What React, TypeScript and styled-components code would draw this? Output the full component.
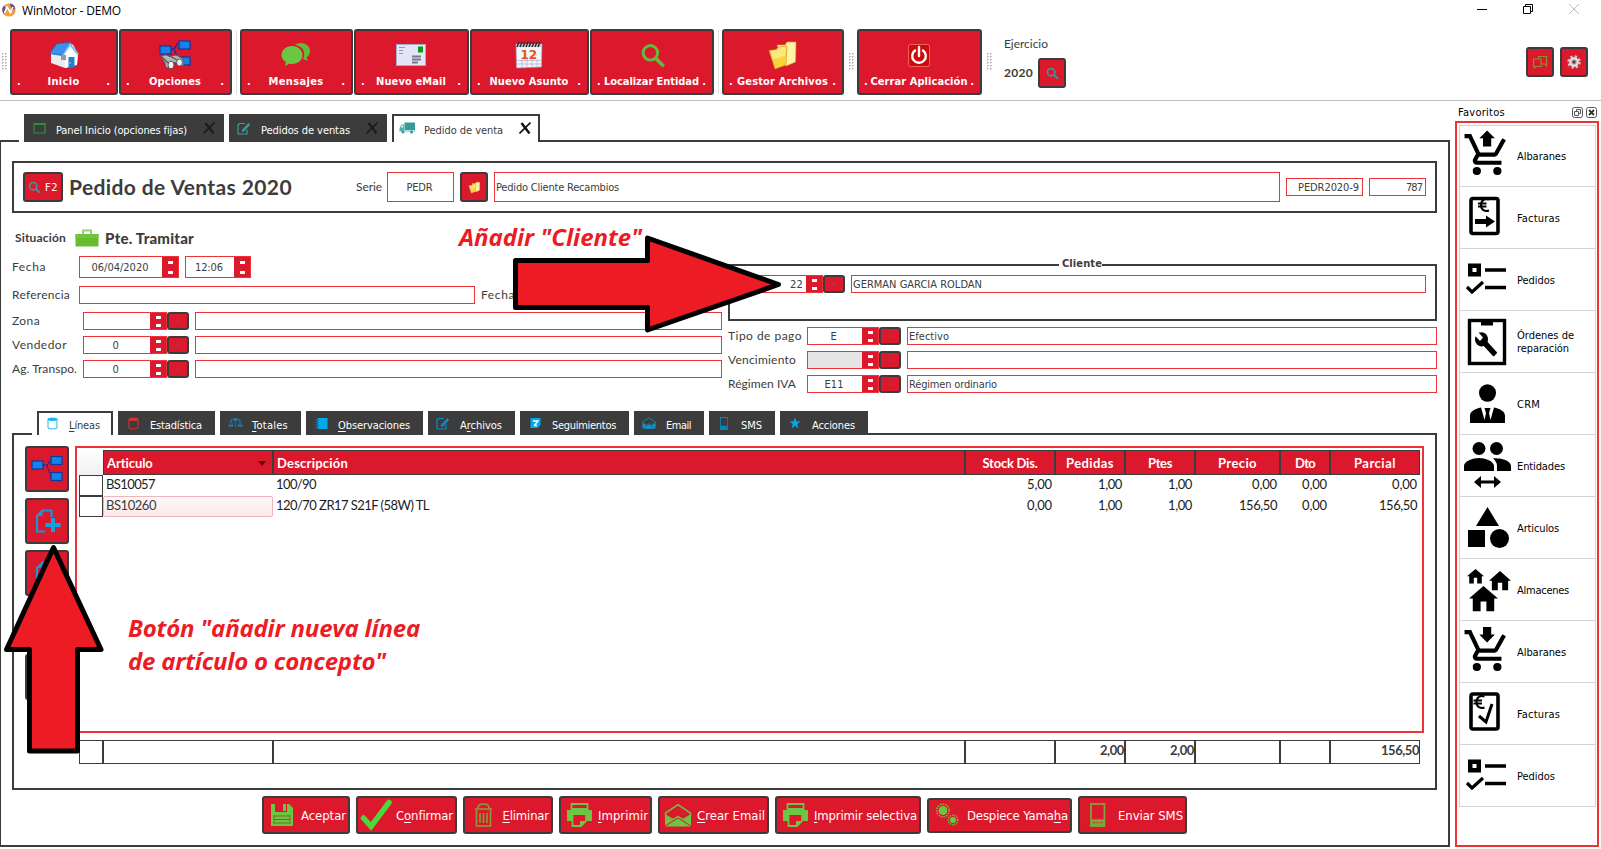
import React, { useLayoutEffect, useRef } from "react";
import styled, { createGlobalStyle, css } from "styled-components";

const RED = "#dc182c";
const LINE = "#ee3338";
const DARK = "#3c3c3c";
const GREEN = "#6cc644";
const BLUE = "#00a8ec";
const TAHOMA = `"DejaVu Sans Condensed", "DejaVu Sans", sans-serif`;
const GOTHIC = `Lato, "Open Sans", sans-serif`;

const Global = createGlobalStyle`
  * { box-sizing: border-box; }
  body { margin: 0; background: #fff; color: ${DARK}; font: 11px ${TAHOMA}; }
  svg { display: block; flex: none; }
  u { text-decoration: underline; text-underline-offset: 2px; }
`;

/* ---------- text ---------- */

const TextSpan = styled.span`
  white-space: pre;
  flex: none;
`;

/* One line of text tracked to a fixed width; "&" marks the accelerator letter. */
function Text({ w, children }: { w: number; children: string }) {
  const ref = useRef<HTMLSpanElement>(null);
  const at = children.indexOf("&");
  const plain = children.replace("&", "");
  useLayoutEffect(() => {
    const el = ref.current;
    if (!el) return;
    el.style.letterSpacing = "0px";
    const natural = el.getBoundingClientRect().width;
    el.style.letterSpacing = `${((w + 1 - natural) / plain.length).toFixed(3)}px`;
  }, [w, plain]);
  return (
    <TextSpan ref={ref}>
      {at < 0 ? plain : (
        <>
          {plain.slice(0, at)}
          <u>{plain[at]}</u>
          {plain.slice(at + 1)}
        </>
      )}
    </TextSpan>
  );
}

/* ---------- frame ---------- */

const Window = styled.div`
  position: relative;
  width: 1601px;
  height: 849px;
  overflow: hidden;
  background: #fff;
  display: flex;
  flex-direction: column;
`;
const TitleBar = styled.header`
  height: 29px;
  padding: 3px 21px 0 2px;
  display: flex;
  align-items: flex-start;
  gap: 6px;
  font: 12px/15px "Open Sans", sans-serif;
  color: #000;
`;
const WindowControls = styled.div`
  margin-left: auto;
  display: flex;
  gap: 35px;
`;
const Toolbar = styled.div`
  height: 72px;
  border-bottom: 1px solid #c0c0c0;
  padding-left: 2px;
  display: flex;
  align-items: flex-start;
`;
const Grip = styled.div<{ $ml?: number; $mr?: number }>`
  width: 5px;
  height: 17px;
  margin: 24px ${(p) => p.$mr ?? 3}px 0 ${(p) => p.$ml ?? 0}px;
  background: radial-gradient(circle at 0.7px 0.7px, #b4b4b4 0.8px, transparent 0.9px) 0 0 / 3px 3px;
`;
const Separator = styled.div`
  width: 1px;
  height: 64px;
  margin: 1px 3px 0 4px;
  background: #e2e2e2;
`;
const raised = css`
  background: ${RED};
  border: 2px solid ${DARK};
  border-radius: 3px;
  color: #fff;
`;
const ToolButton = styled.div<{ $w: number; $gap?: number }>`
  ${raised}
  width: ${(p) => p.$w}px;
  height: 66px;
  margin-right: ${(p) => p.$gap ?? 1}px;
  padding: 8px 6px 0 5px;
  display: flex;
  flex-direction: column;
  align-items: center;
  gap: 3px;
`;
const ToolCaption = styled.div`
  width: 100%;
  display: flex;
  justify-content: space-between;
  font-weight: bold;
  line-height: 15px;
`;
const IconButton = styled.div<{ $w: number; $h: number }>`
  ${raised}
  width: ${(p) => p.$w}px;
  height: ${(p) => p.$h}px;
  flex: none;
  display: flex;
  align-items: center;
  justify-content: center;
`;
const Exercise = styled.div`
  margin: 7px 0 0 12px;
  font: 12px/16px ${GOTHIC};
`;
const ExerciseRow = styled.div`
  display: flex;
  align-items: center;
  gap: 5px;
  margin-top: 6px;
  font-weight: bold;
`;
const ToolRight = styled.div`
  margin: 18px 13px 0 auto;
  display: flex;
  gap: 6px;
`;

/* ---------- tabs ---------- */

const Body = styled.div`
  flex: 1;
  display: flex;
  min-height: 0;
`;
const Main = styled.main`
  width: 1450px;
  height: 746px;
  padding-top: 13px;
  display: flex;
  flex-direction: column;
`;
const Strip = styled.div<{ $h: number }>`
  display: flex;
  gap: 5px;
  height: ${(p) => p.$h}px;
  flex: none;
`;
const StripLine = styled.div<{ $w?: number; $join?: boolean }>`
  ${(p) => (p.$w ? `width: ${p.$w}px;` : "flex: 1;")}
  ${(p) => p.$join && "margin-left: -5px;"}
  border-bottom: 2px solid ${DARK};
`;
const Tab = styled.div<{ $w: number; $active?: boolean }>`
  width: ${(p) => p.$w}px;
  display: flex;
  align-items: center;
  background: ${(p) => (p.$active ? "#fff" : DARK)};
  color: ${(p) => (p.$active ? DARK : "#fff")};
  border: 2px solid ${DARK};
  border-bottom-width: 0;
  padding: 3px 7px 0 2px;
`;
const TabIcon = styled.span`
  width: 22px;
  margin: 0 6px 5px 0;
  display: flex;
  justify-content: center;
`;
const TabClose = styled.span`
  margin: 0 0 5px auto;
`;
const Page = styled.section`
  flex: 1;
  border: solid ${DARK};
  border-width: 0 2px 2px 1px;
  padding: 19px 11px 0;
  display: flex;
  flex-direction: column;
`;

/* ---------- fields ---------- */

const HeaderBox = styled.div`
  height: 52px;
  border: 2px solid ${DARK};
  padding: 0 9px;
  display: flex;
  align-items: center;
  gap: 6px;
  flex: none;
`;
const Heading = styled.h1`
  margin: 0;
  width: 281px;
  font: bold 21px/26px ${GOTHIC};
`;
const Caption = styled.label<{ $w?: number }>`
  ${(p) => p.$w && `width: ${p.$w}px;`}
  flex: none;
  display: flex;
  font: 12px/16px ${GOTHIC};
`;
const Field = styled.div<{ $w?: number; $h?: number; $muted?: boolean }>`
  ${(p) => (p.$w ? `width: ${p.$w}px; flex: none;` : "flex: 1;")}
  height: ${(p) => p.$h ?? 18}px;
  border: 1px solid ${LINE};
  background: ${(p) => (p.$muted ? "#e4e4e4" : "#fff")};
  display: flex;
  align-items: center;
  overflow: hidden;
`;
const Value = styled.div<{ $align?: string }>`
  flex: 1;
  padding: 1px 3px 0 1px;
  display: flex;
  justify-content: ${(p) => p.$align ?? "flex-start"};
`;
const SpinBlock = styled.div<{ $tall?: boolean }>`
  width: 16px;
  align-self: stretch;
  background: ${RED};
  padding: ${(p) => (p.$tall ? "4px 0 3px" : "3px 0 2px")};
  display: flex;
  flex-direction: column;
  justify-content: space-between;
  align-items: center;
`;
const SpinMark = styled.i`
  width: 5px;
  height: 3px;
  background: #fff;
`;
const Form = styled.div`
  height: 198px;
  display: flex;
  gap: 6px;
`;
const Column = styled.div<{ $w: number }>`
  width: ${(p) => p.$w}px;
  display: flex;
  flex-direction: column;
`;
const Row = styled.div<{ $mt?: number }>`
  display: flex;
  align-items: center;
  margin-top: ${(p) => p.$mt ?? 6}px;
`;
const Gap = styled.span<{ $w?: number; $h?: number }>`
  width: ${(p) => p.$w ?? 6}px;
  height: ${(p) => p.$h ?? 0}px;
  flex: none;
`;
const Status = styled.div`
  height: 20px;
  margin-top: 15px;
  padding-left: 3px;
  display: flex;
  align-items: center;
  font: bold 12px/16px ${GOTHIC};
`;
const StatusValue = styled.strong`
  margin-left: 6px;
  font-size: 15px;
`;
const Group = styled.fieldset`
  margin: 43px 0 0;
  height: 65px;
  border: 2px solid ${DARK};
  padding: 0 9px 0 5px;
`;
const Legend = styled.legend`
  margin: 0 auto;
  padding: 1px 0 3px 3px;
  font-weight: bold;
  font-size: 11px;
  line-height: 14px;
`;

/* ---------- lines ---------- */

const LinesPanel = styled.div`
  height: 355px;
  border: solid ${DARK};
  border-width: 0 2px 2px;
  padding: 11px 11px 0;
  display: flex;
  gap: 6px;
  flex: none;
`;
const SideButtons = styled.div`
  display: flex;
  flex-direction: column;
  gap: 6px;
`;
const GridArea = styled.div`
  width: 1349px;
`;
const GridFrame = styled.div`
  height: 287px;
  border: 2px solid ${LINE};
  padding: 2px;
`;
const GridRow = styled.div<{ $h: number }>`
  display: grid;
  grid-template-columns: 24px 170px 692px 90px 70px 70px 85px 50px 90px;
  height: ${(p) => p.$h}px;
`;
const Corner = styled.div`
  background: linear-gradient(#fff, #f0f0f0);
`;
const HeadCell = styled.div<{ $left?: boolean }>`
  background: ${RED};
  border: 1px solid ${DARK};
  color: #fff;
  font: bold 13px/16px ${GOTHIC};
  padding: ${(p) => (p.$left ? "1px 6px 0 3px" : "1px 2px 0")};
  display: flex;
  align-items: center;
  justify-content: ${(p) => (p.$left ? "space-between" : "center")};
`;
const RowMark = styled.div`
  border: 1px solid ${DARK};
`;
const Cell = styled.div<{ $num?: boolean; $sel?: boolean }>`
  padding: 0 3px 3px 3px;
  display: flex;
  align-items: center;
  justify-content: ${(p) => (p.$num ? "flex-end" : "flex-start")};
  font: 13px/16px ${GOTHIC};
  color: #1c1c1c;
  ${(p) => p.$sel && css`
    background: linear-gradient(#fff8f8, #fde8ea);
    border: 1px solid #f0b4bc;
    border-radius: 2px;
    padding: 0 1px 3px 2px;
    color: ${DARK};
  `}
`;
const Totals = styled.div`
  margin: 7px 0 0 4px;
`;
const TotalCell = styled.div`
  border: 1px solid ${DARK};
  padding-bottom: 4px;
  display: flex;
  align-items: center;
  justify-content: flex-end;
  font: bold 13px/16px ${GOTHIC};
`;
const Actions = styled.div`
  margin: 6px 0 0 250px;
  height: 38px;
  display: flex;
  align-items: center;
  gap: 6px;
`;
const Action = styled.div<{ $w: number; $h?: number }>`
  ${raised}
  width: ${(p) => p.$w}px;
  height: ${(p) => p.$h ?? 38}px;
  padding: 0 2px 0 1px;
  display: flex;
  align-items: center;
  justify-content: space-between;
  font-size: 13px;
`;
const ActionIcon = styled.span`
  width: 34px;
  display: flex;
  justify-content: center;
`;

/* ---------- favourites ---------- */

const Side = styled.aside`
  margin-left: 5px;
  width: 144px;
  color: #000;
`;
const SideTitle = styled.div`
  height: 20px;
  padding: 2px 2px 0 3px;
  display: flex;
  align-items: center;
  gap: 3px;
`;
const SideSpacer = styled.span`
  flex: 1;
`;
const SideFrame = styled.div`
  height: 726px;
  border: 2px solid ${LINE};
  padding: 2px 1px 0 2px;
`;
const SideItem = styled.div`
  height: 62px;
  border: 1px solid #d4d4d4;
  border-top-width: 0;
  display: flex;
  align-items: center;
  line-height: 13px;
  &:first-child { border-top-width: 1px; }
`;
const SideLabel = styled.div`
  margin: 1px 0 0 3px;
  display: flex;
  flex-direction: column;
  align-items: flex-start;
`;

/* ---------- annotations ---------- */

const Note = styled.div<{ $x: number; $y: number }>`
  position: absolute;
  left: ${(p) => p.$x}px;
  top: ${(p) => p.$y}px;
  display: flex;
  flex-direction: column;
  align-items: flex-start;
  font: italic bold 24px/33px "Open Sans", sans-serif;
  color: #ed1c24;
`;
const Overlay = styled.svg`
  position: absolute;
  left: 0;
  top: 0;
`;

/* ---------- icons ---------- */

const Logo = () => (
  <svg width="14" height="14" viewBox="0 0 14 14">
    <circle cx="7" cy="7" r="6.6" fill="#f0a03c" />
    <path d="M2 2.5A6.6 6.6 0 0 0 2 11.5L4 6ZM8 .4a6.6 6.6 0 0 1 5.4 5L10 8Z" fill="#6a4a9c" />
    <path d="M2.5 10 5 4l3.5 5.5L11 4" fill="none" stroke="#fff" strokeWidth="1.7" />
  </svg>
);
const House = () => (
  <svg width="32" height="32" viewBox="0 0 32 32">
    <path d="M3 13.5 11 5l14 .5L30 15l-1 10.500-12 3.500L3 24Z" fill="#e9edf2" />
    <path d="M17 15l6-8 6.500 9-.5 10-12 3Z" fill="#fff" />
    <path d="M1.500 14.500 9 4.500 22 3.500l-8 13Z" fill="#3a93e8" stroke="#1b62b4" strokeWidth=".8" />
    <path d="M22 3.500 31 15l-2 .8-7-8.800-6.500 9.500-1.500 0Z" fill="#7cc0f8" />
    <path d="M13 16h5v5h-5z" fill="#999" />
    <path d="M20.500 18h6v10l-6 1.500Z" fill="#1d80dc" />
    <circle cx="22" cy="24" r=".8" fill="#ffd94a" />
  </svg>
);
const Node = ({ x, y, w = 11, h = 8 }: { x: number; y: number; w?: number; h?: number }) => (
  <rect x={x} y={y} width={w} height={h} fill="#1382ea" stroke="#0a3aa0" strokeWidth="1.2" />
);
const Options = () => (
  <svg width="32" height="32" viewBox="0 0 32 32">
    <path d="M11 10h4l4-6M15 10l5 13" stroke="#342a8c" strokeWidth="1.6" fill="none" />
    <Node x={1} y={7} />
    <Node x={20} y={2} />
    <Node x={20} y={18} />
    <path d="M2 18c2-2.500 6-2.500 8-.5l7-1.500 6 3c2 2 2.500 6 1 8l-4-1-4-3-3 4-4 2c-2 0-3-3-3-5Z" fill="#b4b4b4" stroke="#4b4b4b" strokeWidth=".8" />
    <path d="m3 18 6 6M11 17l7 4" stroke="#555" strokeWidth="1.400" />
    <ellipse cx="12" cy="26" rx="3" ry="3.800" fill="#e6f3f9" stroke="#555" />
    <ellipse cx="20.500" cy="23.500" rx="2.900" ry="3.600" fill="#e6f3f9" stroke="#555" />
  </svg>
);
const Chat = () => (
  <svg width="32" height="32" viewBox="0 0 32 32">
    <path d="M20 4c6 0 10 3.500 10 8 0 3-1.500 5-3.500 6.500L28 22l-5-2c3-5 1-13-8-14 1-1 3-2 5-2Z" fill="#64bb3a" />
    <path d="M12 7c6 0 10.500 4 10.500 9S18 25 12 25l-3-.3L5 27l1-4c-3-1.500-4.500-4-4.500-7C1.500 11 6 7 12 7Z" fill={GREEN} />
  </svg>
);
const Envelope = () => (
  <svg width="32" height="32" viewBox="0 0 32 32">
    <rect x="1.500" y="5.500" width="29" height="21" fill="#e4e6f6" stroke="#a9abc6" />
    <path d="M4 8.500h6M4 11.500h4M4 14.500h4" stroke="#99a" strokeWidth="1" />
    <path d="M23 7.500h5v6h-5z" fill="#0a9a18" />
    <path d="M17 17.500h9M17 20.500h9M17 23.500h6" stroke="#77798c" strokeWidth="1.800" />
  </svg>
);
const Calendar = () => (
  <svg width="32" height="32" viewBox="0 0 32 32">
    <path d="M3 5h26l-.5 23-25 1Z" fill="#f4f4fb" stroke="#9c98bc" strokeWidth=".7" />
    <path d="M3 5h26v3H3z" fill="#c9c4d8" />
    <path d="m4 8 2-5m1 5 2-5m1 5 2-5m1 5 2-5m1 5 2-5m1 5 2-5m1 5 2-5m1 5 2-5" stroke="#2c2c2c" strokeWidth="1.500" />
    <path d="M4 21.500h25M4 25h25M9 20v8M14 20v8M19 20v8M24 20v8" stroke="#b6b4d8" strokeWidth=".8" />
    <text x="7.500" y="19.500" fontFamily="DejaVu Sans" fontWeight="bold" fontSize="12" fill="#f0500c">12</text>
  </svg>
);
const Magnifier = ({ s, color, sw = 3, box = "0 0 24 24" }: { s: number; color: string; sw?: number; box?: string }) => (
  <svg width={s} height={s} viewBox={box} fill="none" stroke={color} strokeWidth={sw}>
    <circle cx="9.500" cy="9.500" r="6.800" />
    <path d="m14.500 14.500 7.500 7.500" strokeWidth={sw * 1.150} />
  </svg>
);
const Folders = ({ s = 32 }: { s?: number }) => (
  <svg width={s} height={s} viewBox="0 0 32 32">
    <path d="M10 6h8l2-3h9l-.5 20-9.500 4Z" fill="#fff2a4" stroke="#d8ac30" strokeWidth=".6" />
    <path d="M2 11.500l7-1 2.500-2.500 8.500-1-1 19-11 4Z" fill="#f8d438" stroke="#c99b1c" strokeWidth=".6" />
    <path d="m3 12 7-1 2-2.500 7-.8-1 9-12 4Z" fill="#fff09c" opacity=".7" />
  </svg>
);
const Power = () => (
  <svg width="32" height="32" viewBox="0 0 32 32">
    <rect x="5.500" y="5.500" width="21" height="22" rx="2" fill="#cf0a0a" stroke="#f47a70" strokeWidth=".8" />
    <path d="M12 11.500a6.800 6.800 0 1 0 8 0M16 8v9" fill="none" stroke="#fff" strokeWidth="2.400" strokeLinecap="round" />
  </svg>
);
const Gear = () => (
  <svg width="16" height="16" viewBox="0 0 16 16">
    <circle cx="8" cy="8" r="5.600" fill="none" stroke="#ccc" strokeWidth="2.200" strokeDasharray="2.400 2" />
    <circle cx="8" cy="8" r="3.800" fill="#a8a8a8" stroke="#e4e4e4" strokeWidth="2" />
    <circle cx="8" cy="8" r="1.500" fill="#8e1c28" />
  </svg>
);
const Flags = () => (
  <svg width="16" height="16" viewBox="0 0 16 16" fill="none" stroke="#8f8a34" strokeWidth="1.200">
    <path d="M6.500 5H1.500v7.500h1v1.500l1.500-1.500h5V5Z" />
    <path d="M6.500 5V2.500h8V12l-1.500-2H9.500" />
  </svg>
);
const Cross = ({ dim }: { dim?: boolean }) => (
  <svg width="12" height="12" viewBox="0 0 12 12" fill="none" stroke={dim ? "#1c1c1c" : "#111"}>
    <path d="M.5 11.500 11.500.5" strokeWidth="1.600" />
    <path d="m2.500 1 8 10.500" strokeWidth="2.400" />
  </svg>
);
const Sheet = () => (
  <svg width="13" height="13" viewBox="0 0 13 13">
    <path d="M1 1.500h11v9.500H1z" fill="none" stroke="#2f8f3c" strokeWidth="1.200" />
    <path d="M1 1h11v2H1z" fill="#2f8f3c" />
  </svg>
);
const Edit = ({ color }: { color: string }) => (
  <svg width="14" height="13" viewBox="0 0 14 13" fill="none" stroke={color}>
    <path d="M8 1.500H2.500L1 3v9h9V7.500" strokeWidth="1.200" />
    <path d="m5 8.500 6.500-7 1.200 1.200-6.500 7Z" fill={color} strokeWidth=".9" />
  </svg>
);
const Truck = () => (
  <svg width="16" height="12" viewBox="0 0 16 12" fill="#389a9a">
    <path d="M5.500 .5H16V8H5.500z" />
    <path d="M5 2.500H2.500L.5 6v3H5Z" fill="#4cb0b0" />
    <path d="M2 5.500 3 3.500h1v2Z" fill="#fff" />
    <path d="M.5 8.500H16v1H.5z" fill="#5ab8b8" />
    <circle cx="4" cy="10" r="1.500" /><circle cx="12.500" cy="10" r="1.500" />
  </svg>
);
const Drum = ({ color }: { color: string }) => (
  <svg width="11" height="13" viewBox="0 0 11 13">
    <path d="M1 2.500v8.500c2 1.300 7 1.300 9 0V2.500" fill="none" stroke={color} strokeWidth="1" />
    <ellipse cx="5.500" cy="2.300" rx="5" ry="1.800" fill={color} />
  </svg>
);
const Scales = () => (
  <svg width="15" height="12" viewBox="0 0 15 12" fill="none" stroke="#0a86bc">
    <path d="M3 2.500h9M7.500 1.500v9M3 2.500 1.500 8M3 2.500 4.500 8M12 2.500 10.500 8M12 2.500 13.500 8" strokeWidth=".7" />
    <path d="M.5 8h5l-1 1.500h-3ZM9.500 8h5l-1 1.500h-3ZM5.500 1.500h4v2h-4Z" fill="#0a86bc" strokeWidth=".5" />
  </svg>
);
const Notebook = () => (
  <svg width="13" height="13" viewBox="0 0 13 13">
    <path d="M2.500 1h10v11h-10z" fill={BLUE} />
    <path d="M0 3h4M0 5.500h4M0 8h4M0 10.500h4" stroke="#0878ac" strokeWidth="1.100" />
  </svg>
);
const Follow = () => (
  <svg width="11" height="12" viewBox="0 0 11 12">
    <path d="M.5 1h10v7l-3 3h-7z" fill={BLUE} />
    <path d="M3 4h5L4 9M4 8.500h3" stroke="#fff" strokeWidth="1.300" fill="none" />
  </svg>
);
const OpenMail = ({ w, color }: { w: number; color: string }) => (
  <svg width={w} height={w * 0.86} viewBox="0 0 28 24">
    <path d="M1.500 10 14 1.500 26.500 10v2L19 16.500l-5-3-5 3L1.500 12Z" fill="none" stroke={color} strokeWidth="1.500" />
    <path d="m1 12.500 8 5-8 5ZM27 12.500l-8 5 8 5ZM10 18l4-2.500 4 2.500 9 5.500H1Z" fill={color} />
  </svg>
);
const Phone = ({ s, color }: { s: number; color: string }) => (
  <svg width={s * 0.64} height={s} viewBox="0 0 16 25">
    <rect x="1" y="1" width="14" height="23" fill="none" stroke={color} strokeWidth="1.800" />
    <path d="M1 17h14v7H1z" fill={color} />
    <path d="M3 20.500h2.500M7 20.500h2M10.500 20.500H13" stroke={RED} strokeWidth="1.400" opacity=".7" />
  </svg>
);
const Star = () => (
  <svg width="12" height="12" viewBox="0 0 24 24">
    <path d="m12 1 3 8h8l-6.500 5L19 23l-7-5.500L5 23l2.500-9L1 9h8Z" fill={BLUE} />
  </svg>
);
const Tree = () => (
  <svg width="32" height="28" viewBox="0 0 32 28">
    <path d="M12 10h4l4-5M16 11l4 10" stroke="#2d2380" strokeWidth="1.500" fill="none" strokeDasharray="2 1" />
    <Node x={1} y={6} /><Node x={20} y={1.500} /><Node x={20} y={17.500} />
  </svg>
);
const NewDoc = () => (
  <svg width="28" height="26" viewBox="0 0 28 26">
    <path d="M12 23.500H4V8l5.500-5.500h9V9" fill="none" stroke="#1796dc" strokeWidth="2.200" />
    <path d="M3 8 9.500 1.500V8Z" fill="#1796dc" />
    <path d="M12.500 17h15M20 10v14" stroke="#12a2e4" strokeWidth="4" />
  </svg>
);
const Disk = () => (
  <svg width="32" height="26" viewBox="0 0 32 26">
    <path d="M5 2h4v8h12V2h2l4 4v18H5Z" fill={GREEN} />
    <path d="M17 2h3v7h-3z" fill={GREEN} />
    <path d="M8 14h16M8 17.500h16M8 21h16M8 13v9M24 13v9" stroke="#7e6428" strokeWidth="1" />
  </svg>
);
const Check = () => (
  <svg width="34" height="32" viewBox="0 0 34 32">
    <path d="m4.500 19 7.500 8.500L30 3.500" fill="none" stroke="#4fd63a" strokeWidth="5.500" strokeLinecap="round" />
  </svg>
);
const Trash = () => (
  <svg width="32" height="26" viewBox="0 0 32 26" fill="none" stroke="#86a038" strokeWidth="1.600">
    <path d="M8 7h17M11 6c0-3 2-4 5.500-4S22 3 22 6M9.500 8v16h14V8M13 11v10M16.500 11v10M20 11v10" />
  </svg>
);
const Printer = () => (
  <svg width="32" height="26" viewBox="0 0 32 26">
    <path d="M8.500 2h16v5h-16z" fill="none" stroke={GREEN} strokeWidth="1.800" />
    <path d="M4 8h25v11h-5v-6H9v6H4Z" fill={GREEN} />
    <path d="M9.500 13v11H18l5-5v-6" fill="none" stroke={GREEN} strokeWidth="1.800" />
    <path d="M17 24v-5h6Z" fill={GREEN} />
  </svg>
);
const Cogs = () => (
  <svg width="32" height="26" viewBox="0 0 32 26" fill={GREEN} stroke={GREEN}>
    <circle cx="12" cy="8.500" r="4" /><circle cx="22" cy="18" r="2.600" />
    <circle cx="12" cy="8.500" r="6.300" fill="none" strokeWidth="1.600" strokeDasharray="1.400 1.200" />
    <circle cx="22" cy="18" r="4.700" fill="none" strokeWidth="1.500" strokeDasharray="1.200 1.100" />
  </svg>
);
const Case = () => (
  <svg width="24" height="18" viewBox="0 0 24 18">
    <path d="M8 6V1.500h8V6" fill="none" stroke="#8fd07a" strokeWidth="2" />
    <path d="M.5 5h23v12.500H.5z" fill="#66bb30" />
    <path d="M.5 5h23v4H.5z" fill="#72c43c" />
  </svg>
);

const CART =
  "M7 18a2 2 0 1 0 0 4 2 2 0 1 0 0-4zm10 0a2 2 0 1 0 0 4 2 2 0 1 0 0-4zm-9.830-3.250l.03-.12.9-1.630h7.450c.75 0 1.410-.41 1.750-1.030l3.860-7.010L19.420 4h-.01l-1.100 2-2.760 5H8.530l-.13-.27L6.160 6l-.95-2-.94-2H1v2h2l3.600 7.590-1.350 2.450c-.16.28-.25.61-.25.96 0 1.100.9 2 2 2h12v-2H7.420c-.13 0-.25-.11-.25-.25z";
const WRENCH =
  "M22.700 19l-9.100-9.100c.9-2.300.4-5-1.500-6.900-2-2-5-2.400-7.400-1.300L9 6 6 9 1.600 4.700C.4 7.100.9 10.100 2.900 12.100c1.900 1.900 4.600 2.400 6.900 1.500l9.100 9.100c.4.4 1 .4 1.400 0l2.300-2.300c.5-.4.5-1.100.1-1.400z";

const Euro = () => (
  <path d="M25 13.500c-4-1.500-8 .5-8 5.500s4 7 8 5.500M14 17.500h8.500M14 20.500h8.500" fill="none" stroke="#000" strokeWidth="2.100" />
);
const Hut = ({ t }: { t: string }) => <path transform={t} d="M5 0 10 4.500H8.700V9H6V5.500H4V9H1.300V4.500H0Z" />;

const sideIcons: Record<string, React.ReactNode> = {
  cartUp: (
    <g transform="translate(2.500 5) scale(2.050)">
      <path d={CART} />
      <path d="M12 .2 15.800 4H14v4h-4V4H8.200Z" />
    </g>
  ),
  cartDown: (
    <g transform="translate(2.500 5) scale(2.050)">
      <path d={CART} />
      <path d="M12 8 15.800 4.200H14V.5h-4v3.700H8.200Z" />
    </g>
  ),
  invoiceOut: (
    <>
      <rect x="11" y="11.500" width="27" height="35" rx="2" fill="none" stroke="#000" strokeWidth="3.600" />
      <g transform="translate(4 -1)"><Euro /></g>
      <path d="M15 32h11v-3.500l9 6-9 6V37H15Z" />
    </>
  ),
  invoiceOk: (
    <>
      <rect x="11" y="11" width="27" height="35" rx="2" fill="none" stroke="#000" strokeWidth="3.600" />
      <g transform="translate(-.5 0)"><Euro /></g>
      <path d="m19 33 7 6 6-18" fill="none" stroke="#000" strokeWidth="3" />
    </>
  ),
  order: (
    <>
      <path d="M8 14.500h13v13H8Zm4.500 4.500v4h4v-4Z" fillRule="evenodd" />
      <path d="M25 21h21M25 38.500h21" stroke="#000" strokeWidth="3.600" />
      <path d="m7 38 5 5 11-10" fill="none" stroke="#000" strokeWidth="3.200" />
    </>
  ),
  repair: (
    <>
      <rect x="9.500" y="9.500" width="35" height="43" fill="none" stroke="#000" strokeWidth="3.400" />
      <path d="M21 8h12v6.500H21z" />
      <g transform="translate(14 20) scale(1 1.100)"><path d={WRENCH} /></g>
    </>
  ),
  crm: (
    <>
      <ellipse cx="27.500" cy="20" rx="8.500" ry="8.700" />
      <path d="M10 50v-7c0-5 5-7 11-8.500L24.500 47 26 40l-1.500-5h6L29 40l1.500 7L34 34.500c6 1.500 11 3.500 11 8.500v7Z" />
    </>
  ),
  people: (
    <>
      <circle cx="19" cy="13.500" r="6.500" /><circle cx="36.500" cy="13.500" r="6.500" />
      <path d="M4 36v-5c0-5 9-8 15-8s15 3 15 8v5ZM33 23.500c7-1 18 2 18 7.500v5H37v-5c0-3-1.500-5.500-4-7.500Z" />
      <path d="m14 47 7-6v4.500h13V41l7 6-7 6v-4.500H21V53Z" />
    </>
  ),
  shapes: (
    <>
      <path d="M27.500 10 39 29H16Z" /><rect x="8" y="33" width="17" height="17" /><circle cx="39.500" cy="41.500" r="9.500" />
    </>
  ),
  huts: (
    <>
      <Hut t="translate(7 10) scale(1.700 1.600)" />
      <Hut t="translate(29 12) scale(2.200 2.150)" />
      <Hut t="translate(9 27) scale(2.900 2.800)" />
    </>
  ),
};

/* ---------- data ---------- */

const favourites: [string, [string, number][]][] = [
  ["cartUp", [["Albaranes", 48]]],
  ["invoiceOut", [["Facturas", 42]]],
  ["order", [["Pedidos", 37]]],
  ["repair", [["Órdenes de", 56], ["reparación", 51]]],
  ["crm", [["CRM", 22]]],
  ["people", [["Entidades", 47]]],
  ["shapes", [["Articulos", 41]]],
  ["huts", [["Almacenes", 51]]],
  ["cartDown", [["Albaranes", 48]]],
  ["invoiceOk", [["Facturas", 42]]],
  ["order", [["Pedidos", 37]]],
];

const subTabs: [string, number, number, React.ReactNode][] = [
  ["&Líneas", 76, 30, <Drum color="#22b6f0" />],
  ["Estadística", 97, 51, <Drum color="#e02c2c" />],
  ["&Totales", 81, 35, <Scales />],
  ["&Observaciones", 117, 71, <Notebook />],
  ["A&rchivos", 87, 41, <Edit color="#0c90c8" />],
  ["Seguimientos", 109, 63, <Follow />],
  ["Email", 70, 24, <OpenMail w={14} color="#0c9ad8" />],
  ["SMS", 66, 20, <Phone s={13} color="#0c86b8" />],
  ["Acciones", 88, 42, <Star />],
];

const columns: [string, number][] = [
  ["Articulo", 45], ["Descripción", 70], ["Stock Dis.", 54], ["Pedidas", 47], ["Ptes", 23],
  ["Precio", 38], ["Dto", 19], ["Parcial", 41],
];

const lines: [string, number][][] = [
  [["BS10057", 48], ["100/90", 39], ["5,00", 24], ["1,00", 23], ["1,00", 23], ["0,00", 24], ["0,00", 24], ["0,00", 24]],
  [["BS10260", 49], ["120/70 ZR17 S21F (58W) TL", 152], ["0,00", 24], ["1,00", 23], ["1,00", 23], ["156,50", 37], ["0,00", 24], ["156,50", 37]],
];

const totals: ([string, number] | null)[] = [null, null, null, null, ["2,00", 23], ["2,00", 23], null, null, ["156,50", 37]];

const actions: [string, number, number, React.ReactNode, number?][] = [
  ["Aceptar", 88, 44, <Disk />],
  ["C&onfirmar", 101, 56, <Check />],
  ["&Eliminar", 90, 45.5, <Trash />],
  ["&Imprimir", 93, 49, <Printer />],
  ["&Crear Email", 111, 67, <OpenMail w={28} color={GREEN} />],
  ["&Imprimir selectiva", 146, 102, <Printer />],
  ["Despiece Yama&ha", 145, 100, <Cogs />, 35],
  ["Enviar SMS", 109, 64, <Phone s={24} color="#7aa83a" />],
];

/* ---------- composed parts ---------- */

function Tool({ label, w, tw, gap, icon }: { label: string; w: number; tw: number; gap?: number; icon: React.ReactNode }) {
  return (
    <ToolButton $w={w} $gap={gap}>
      {icon}
      <ToolCaption>
        <span>.</span>
        <Text w={tw}>{label}</Text>
        <span>.</span>
      </ToolCaption>
    </ToolButton>
  );
}

function Spin({ w, h, text, tw = 0, align = "center", muted }: { w: number; h?: number; text?: string; tw?: number; align?: string; muted?: boolean }) {
  return (
    <Field $w={w} $h={h} $muted={muted}>
      <Value $align={align}>{text && <Text w={tw}>{text}</Text>}</Value>
      <SpinBlock $tall={!!h}>
        <SpinMark />
        <SpinMark />
      </SpinBlock>
    </Field>
  );
}

const Lookup = () => (
  <IconButton $w={22} $h={18}>
    <Magnifier s={5} color="#a8405c" />
  </IconButton>
);

function LookupRow({ label, lw, cap, spin, code, cw, name, nw, muted }: {
  label: string; lw: number; cap: number; spin: number; code?: string; cw?: number; name?: string; nw?: number; muted?: boolean;
}) {
  return (
    <Row>
      <Caption $w={cap}><Text w={lw}>{label}</Text></Caption>
      <Spin w={spin} text={code} tw={cw} muted={muted} />
      <Lookup />
      <Gap />
      <Field><Value>{name && <Text w={nw ?? 0}>{name}</Text>}</Value></Field>
    </Row>
  );
}

export default function App() {
  return (
    <Window>
      <Global />
      <TitleBar>
        <Logo />
        <Text w={98}>WinMotor - DEMO</Text>
        <WindowControls>
          <svg width="11" height="12"><path d="M0 6.500h10" stroke="#000" /></svg>
          <svg width="11" height="12" fill="none" stroke="#000"><path d="M.5 3.500h7v7h-7zM2.500 3.500v-2h7v7h-2" /></svg>
          <svg width="11" height="12" stroke="#bbb"><path d="m0 1 10 10M10 1 0 11" /></svg>
        </WindowControls>
      </TitleBar>

      <Toolbar>
        <Grip />
        <Tool label="Inicio" w={108} tw={31} icon={<House />} />
        <Tool label="Opciones" w={113} tw={51} gap={0} icon={<Options />} />
        <Separator />
        <Tool label="Mensajes" w={113} tw={54} icon={<Chat />} />
        <Tool label="Nuevo eMail" w={115} tw={69} icon={<Envelope />} />
        <Tool label="Nuevo Asunto" w={119} tw={78} icon={<Calendar />} />
        <Tool label="Localizar Entidad" w={124} tw={94} gap={0} icon={<Magnifier s={32} color="#62bb3c" sw={2.8} box="-4 -3.500 30 30" />} />
        <Separator />
        <Tool label="Gestor Archivos" w={122} tw={90} gap={0} icon={<Folders />} />
        <Grip $ml={5} $mr={3} />
        <Tool label="Cerrar Aplicación" w={125} tw={96} gap={0} icon={<Power />} />
        <Grip $ml={5} $mr={0} />
        <Exercise>
          <Text w={43}>Ejercicio</Text>
          <ExerciseRow>
            <Text w={28}>2020</Text>
            <IconButton $w={28} $h={30}><Magnifier s={13} color="#3a9aa0" /></IconButton>
          </ExerciseRow>
        </Exercise>
        <ToolRight>
          <IconButton $w={28} $h={30}><Flags /></IconButton>
          <IconButton $w={28} $h={30}><Gear /></IconButton>
        </ToolRight>
      </Toolbar>

      <Body>
        <Main>
          <Strip $h={28}>
            <StripLine $w={19} />
            <Tab $w={200}><TabIcon><Sheet /></TabIcon><Text w={130}>Panel Inicio (opciones fijas)</Text><TabClose><Cross dim /></TabClose></Tab>
            <Tab $w={158}><TabIcon><Edit color="#38a0a0" /></TabIcon><Text w={88}>Pedidos de ventas</Text><TabClose><Cross dim /></TabClose></Tab>
            <Tab $w={148} $active><TabIcon><Truck /></TabIcon><Text w={78}>Pedido de venta</Text><TabClose><Cross /></TabClose></Tab>
            <StripLine $join />
          </Strip>

          <Page>
            <HeaderBox>
              <IconButton $w={40} $h={30}><Magnifier s={13} color="#3a9aa0" /><Gap $w={4} /><Text w={12}>F2</Text></IconButton>
              <Heading><Text w={222}>Pedido de Ventas 2020</Text></Heading>
              <Caption $w={25}><Text w={25}>Serie</Text></Caption>
              <Field $w={67} $h={30}><Value $align="center"><Text w={25}>PEDR</Text></Value></Field>
              <IconButton $w={28} $h={30}><Folders s={13} /></IconButton>
              <Field $h={30}><Value><Text w={122}>Pedido Cliente Recambios</Text></Value></Field>
              <Field $w={77}><Value $align="flex-end"><Text w={60}>PEDR2020-9</Text></Value></Field>
              <Field $w={57}><Value $align="flex-end"><Text w={15}>787</Text></Value></Field>
            </HeaderBox>

            <Form>
              <Column $w={710}>
                <Status>
                  <Text w={50}>Situación</Text>
                  <Gap $w={9} />
                  <Case />
                  <StatusValue><Text w={88}>Pte. Tramitar</Text></StatusValue>
                </Status>
                <Row $mt={8}>
                  <Caption $w={67}><Text w={33}>Fecha</Text></Caption>
                  <Spin w={100} h={22} text="06/04/2020" tw={56} />
                  <Gap />
                  <Spin w={66} h={22} text="12:06" tw={27} />
                </Row>
                <Row $mt={8}>
                  <Caption $w={67}><Text w={57}>Referencia</Text></Caption>
                  <Field $w={396} />
                  <Gap />
                  <Caption><Text w={33}>Fecha</Text></Caption>
                </Row>
                <Row $mt={2} />
                <LookupRow label="Zona" lw={27} cap={71} spin={84} />
                <LookupRow label="Vendedor" lw={54} cap={71} spin={84} code="0" cw={6} />
                <LookupRow label="Ag. Transpo." lw={64} cap={71} spin={84} code="0" cw={6} />
              </Column>
              <Column $w={709}>
                <Group>
                  <Legend><Text w={39}>Cliente</Text></Legend>
                  <Row $mt={1}>
                    <Spin w={88} text="22" tw={12} align="flex-end" />
                    <Lookup />
                    <Gap />
                    <Field><Value><Text w={128}>GERMAN GARCIA ROLDAN</Text></Value></Field>
                  </Row>
                </Group>
                <LookupRow label="Tipo de pago" lw={73} cap={79} spin={72} code="E" cw={6} name="Efectivo" nw={39} />
                <LookupRow label="Vencimiento" lw={67} cap={79} spin={72} muted />
                <LookupRow label="Régimen IVA" lw={67} cap={79} spin={72} code="E11" cw={18} name="Régimen ordinario" nw={87} />
              </Column>
            </Form>

            <Strip $h={24}>
              <StripLine $w={20} />
              {subTabs.map(([label, w, tw, icon], i) => (
                <Tab key={label} $w={w} $active={i === 0}>
                  <TabIcon>{icon}</TabIcon>
                  <Text w={tw}>{label}</Text>
                </Tab>
              ))}
              <StripLine $join />
            </Strip>
            <LinesPanel>
              <SideButtons>
                <IconButton $w={44} $h={46}><Tree /></IconButton>
                <IconButton $w={44} $h={46}><NewDoc /></IconButton>
                <IconButton $w={44} $h={46}><NewDoc /></IconButton>
                <Gap $w={44} $h={46} />
                <IconButton $w={44} $h={46} />
              </SideButtons>
              <GridArea>
                <GridFrame>
                  <GridRow $h={25}>
                    <Corner />
                    {columns.map(([label, w], i) => (
                      <HeadCell key={label} $left={i < 2}>
                        <Text w={w}>{label}</Text>
                        {i === 0 && <svg width="8" height="5"><path d="M0 0h8L4 5Z" fill="#5a0810" /></svg>}
                      </HeadCell>
                    ))}
                  </GridRow>
                  {lines.map((line, r) => (
                    <GridRow $h={21} key={r}>
                      <RowMark />
                      {line.map(([value, w], c) => (
                        <Cell key={c} $num={c > 1} $sel={r === 1 && c === 0}><Text w={w}>{value}</Text></Cell>
                      ))}
                    </GridRow>
                  ))}
                </GridFrame>
                <Totals>
                  <GridRow $h={24}>
                    {totals.map((t, i) => <TotalCell key={i}>{t && <Text w={t[1]}>{t[0]}</Text>}</TotalCell>)}
                  </GridRow>
                </Totals>
              </GridArea>
            </LinesPanel>

            <Actions>
              {actions.map(([label, w, tw, icon, h]) => (
                <Action key={label} $w={w} $h={h}>
                  <ActionIcon>{icon}</ActionIcon>
                  <Text w={tw}>{label}</Text>
                </Action>
              ))}
            </Actions>
          </Page>
        </Main>

        <Side>
          <SideTitle>
            <Text w={46}>Favoritos</Text>
            <SideSpacer />
            <svg width="11" height="11" fill="none" stroke="#555"><rect x=".5" y=".5" width="10" height="10" rx="2" /><path d="M2.500 4.500h4v4h-4zM4.500 4.500v-2h4v4h-2" /></svg>
            <svg width="11" height="11" fill="none" stroke="#555"><rect x=".5" y=".5" width="10" height="10" rx="2" /><path d="m3 3 5 5M8 3 3 8" strokeWidth="1.800" stroke="#333" /></svg>
          </SideTitle>
          <SideFrame>
            {favourites.map(([icon, label], i) => (
              <SideItem key={i}>
                <svg width="54" height="62" viewBox="0 0 54 62">{sideIcons[icon]}</svg>
                <SideLabel>{label.map(([t, w]) => <Text key={t} w={w}>{t}</Text>)}</SideLabel>
              </SideItem>
            ))}
          </SideFrame>
        </Side>
      </Body>

      <Note $x={459} $y={220}><Text w={182}>Añadir "Cliente"</Text></Note>
      <Note $x={128} $y={611}>
        <Text w={291}>Botón "añadir nueva línea</Text>
        <Text w={257}>de artículo o concepto"</Text>
      </Note>
      <Overlay width="800" height="760" viewBox="0 0 800 760" fill="#ed1c24" stroke="#000" strokeWidth="5" strokeLinejoin="round">
        <path d="M515.500 260.500h132V238L778.500 284.500 647.500 330v-22.500h-132Z" />
        <path d="M53.500 547.500 101 649.500H77.500V751h-48V649.500H6.500Z" />
      </Overlay>
    </Window>
  );
}
